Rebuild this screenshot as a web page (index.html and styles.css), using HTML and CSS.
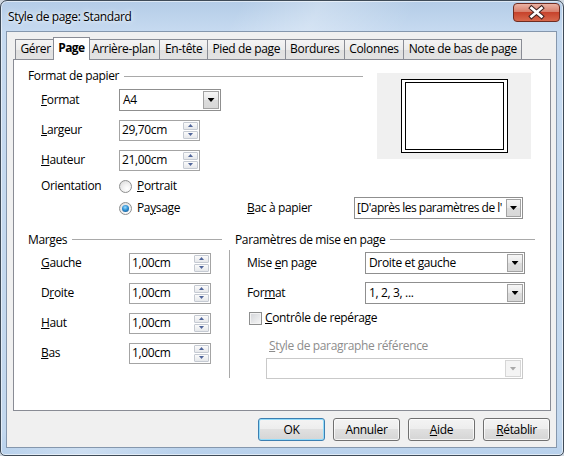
FILE: index.html
```html
<!DOCTYPE html>
<html lang="fr">
<head>
<meta charset="utf-8">
<title>Style de page: Standard</title>
<link rel="stylesheet" href="styles.css">
</head>
<body>
<div class="window">
  <div class="titlebar">
    <span class="title">Style de page: Standard</span>
    <div class="close" aria-label="Fermer">
      <svg width="47" height="19" viewBox="0 0 47 19">
        <defs>
          <linearGradient id="cg" x1="0" y1="0" x2="0" y2="1">
            <stop offset="0" stop-color="#ecb6a8"/>
            <stop offset="0.45" stop-color="#d8806d"/>
            <stop offset="0.5" stop-color="#c7432c"/>
            <stop offset="1" stop-color="#d86a4e"/>
          </linearGradient>
        </defs>
        <rect x="0.5" y="0.5" width="46" height="18" rx="3.5" fill="url(#cg)" stroke="#6e2c22"/>
        <path d="M18.5 5 L28.5 13.5 M28.5 5 L18.5 13.5" stroke="#402321" stroke-width="4.6" stroke-linecap="square" fill="none"/>
        <path d="M18.5 5 L28.5 13.5 M28.5 5 L18.5 13.5" stroke="#ffffff" stroke-width="2.6" stroke-linecap="square" fill="none"/>
      </svg>
    </div>
  </div>

  <div class="client">
    <div class="tabs">
      <div class="tab">Gérer</div>
      <div class="tab active">Page</div>
      <div class="tab">Arrière-plan</div>
      <div class="tab">En-tête</div>
      <div class="tab">Pied de page</div>
      <div class="tab">Bordures</div>
      <div class="tab">Colonnes</div>
      <div class="tab">Note de bas de page</div>
    </div>

    <div class="panel">
      <div class="top">
        <div class="paper">
          <div class="group-head"><span>Format de papier</span><i class="rule"></i></div>
          <div class="row">
            <span class="lbl lbl-paper"><u>F</u>ormat</span>
            <div class="combo combo-format"><span class="val">A4</span><span class="drop"></span></div>
          </div>
          <div class="row">
            <span class="lbl lbl-paper"><u>L</u>argeur</span>
            <div class="field spin-field"><span class="val">29,70cm</span><span class="spin"><i class="up"></i><i class="dn"></i></span></div>
          </div>
          <div class="row">
            <span class="lbl lbl-paper"><u>H</u>auteur</span>
            <div class="field spin-field"><span class="val">21,00cm</span><span class="spin"><i class="up"></i><i class="dn"></i></span></div>
          </div>
          <div class="row short">
            <span class="lbl lbl-paper">Orientation</span>
            <span class="radio-item"><span class="radio"></span><span><u>P</u>ortrait</span></span>
          </div>
        </div>
        <div class="preview"><div class="sheet"><div class="sheet-inner"></div></div></div>
      </div>

      <div class="row short paysage">
        <span class="radio-item radio-paysage"><span class="radio on"></span><span>Pa<u>y</u>sage</span></span>
        <span class="lbl lbl-bac"><u>B</u>ac à papier</span>
        <div class="combo combo-bac"><span class="val">[D'après les paramètres de l'</span><span class="drop"></span></div>
      </div>

      <div class="bottom">
        <div class="marges">
          <div class="group-head"><span>Marges</span><i class="rule"></i></div>
          <div class="row">
            <span class="lbl lbl-marge"><u>G</u>auche</span>
            <div class="field spin-field marge-field"><span class="val">1,00cm</span><span class="spin"><i class="up"></i><i class="dn"></i></span></div>
          </div>
          <div class="row">
            <span class="lbl lbl-marge">D<u>r</u>oite</span>
            <div class="field spin-field marge-field"><span class="val">1,00cm</span><span class="spin"><i class="up"></i><i class="dn"></i></span></div>
          </div>
          <div class="row">
            <span class="lbl lbl-marge"><u>H</u>aut</span>
            <div class="field spin-field marge-field"><span class="val">1,00cm</span><span class="spin"><i class="up"></i><i class="dn"></i></span></div>
          </div>
          <div class="row">
            <span class="lbl lbl-marge"><u>B</u>as</span>
            <div class="field spin-field marge-field"><span class="val">1,00cm</span><span class="spin"><i class="up"></i><i class="dn"></i></span></div>
          </div>
        </div>

        <div class="vsep"><div class="vline"></div></div>

        <div class="params">
          <div class="group-head"><span>Paramètres de mise en page</span><i class="rule"></i></div>
          <div class="row">
            <span class="lbl lbl-param">Mise <u>e</u>n page</span>
            <div class="combo combo-layout"><span class="val">Droite et gauche</span><span class="drop"></span></div>
          </div>
          <div class="row">
            <span class="lbl lbl-param">For<u>m</u>at</span>
            <div class="combo combo-layout"><span class="val">1, 2, 3, ...</span><span class="drop"></span></div>
          </div>
          <div class="check-row"><span class="checkbox"></span><span><u>C</u>ontrôle de repérage</span></div>
          <div class="ref-label"><u>S</u>tyle de paragraphe référence</div>
          <div class="combo combo-ref disabled"><span class="val"></span><span class="drop"></span></div>
        </div>
      </div>
    </div>

    <div class="buttons">
      <div class="btn default">OK</div>
      <div class="btn">Annuler</div>
      <div class="btn"><span><u>A</u>ide</span></div>
      <div class="btn"><span><u>R</u>établir</span></div>
    </div>
  </div>
</div>
</body>
</html>
```

FILE: styles.css
```css
* { box-sizing: border-box; }

html, body {
  margin: 0;
  padding: 0;
}

body {
  width: 564px;
  height: 456px;
  overflow: hidden;
  background: #cfd7e0;
  font: 12px/16px "Open Sans", "Noto Sans", "DejaVu Sans", sans-serif;
  letter-spacing: -0.35px;
  color: #000;
}

u { text-decoration: underline; text-underline-offset: 1px; }

.window {
  width: 564px;
  height: 456px;
  border: 1px solid #3f4b58;
  border-radius: 7px 7px 5px 5px;
  background:
    linear-gradient(118deg, rgba(255,255,255,0) 30%, rgba(255,255,255,0.28) 40%, rgba(255,255,255,0) 52%),
    linear-gradient(180deg, #b4cce7 0, #c6daf0 30px, #c3d8ee 430px, #b8d1ec 100%);
  box-shadow: inset 0 0 0 1px rgba(255,255,255,0.55);
  display: flex;
  flex-direction: column;
  overflow: hidden;
}

.titlebar {
  height: 30px;
  flex: none;
  display: flex;
  align-items: flex-start;
  padding-left: 7px;
}

.title {
  margin-top: 7px;
  line-height: 17px;
  text-shadow: 0 0 7px rgba(255,255,255,0.95), 0 0 3px rgba(255,255,255,0.8);
}

.close {
  margin-left: auto;
  margin-top: 2px;
  margin-right: 3px;
  width: 47px;
  height: 19px;
}
.close svg { display: block; }

.client {
  flex: 1;
  margin: 0 6px 7px 5px;
  border: 1px solid #8597ad;
  background: #f0f0f0;
  padding: 5px 5px 0 6px;
  display: flex;
  flex-direction: column;
}

/* tabs */
.tabs {
  display: flex;
  align-items: flex-end;
  height: 22px;
  padding-left: 2px;
  position: relative;
  z-index: 1;
}

.tab {
  height: 20px;
  padding: 0 4.5px;
  border: 1px solid #898c95;
  border-bottom: none;
  margin-left: -1px;
  background: linear-gradient(#f4f4f4, #ececec 50%, #e0e0e0 51%, #e3e3e3);
  line-height: 18px;
  white-space: nowrap;
}
.tab:first-child { margin-left: 0; }

.tab.active {
  position: relative;
  z-index: 2;
  height: 23px;
  margin-bottom: -1px;
  margin-left: -3px;
  margin-right: -2px;
  padding: 0 4px;
  background: #fff;
  font-weight: bold;
  letter-spacing: -0.6px;
  line-height: 20px;
}

/* panel */
.panel {
  height: 352px;
  flex: none;
  border: 1px solid #898c95;
  background: #fff;
  padding: 0 14px;
}

.top {
  display: flex;
  gap: 14px;
}

.paper { width: 335px; }

.group-head {
  display: flex;
  align-items: center;
  gap: 5px;
  height: 16px;
  white-space: nowrap;
}
.paper .group-head { margin-top: 8px; margin-bottom: 1px; }

.rule {
  flex: 1;
  height: 1px;
  background: #a9a9a9;
}

.row {
  display: flex;
  align-items: center;
  height: 30px;
  padding-left: 13px;
  white-space: nowrap;
}
.row.short { height: 22px; }

.lbl { flex: none; }
.lbl-paper { width: 78px; }
.lbl-marge { width: 88px; }
.lbl-bac { width: 107px; }
.lbl-param { width: 118px; }

/* fields */
.field {
  height: 21px;
  border: 1px solid #a4a4a4;
  background: #fff;
  display: flex;
  align-items: center;
  padding: 0 1px 0 2px;
}
.spin-field { width: 81px; }
.marge-field { width: 82px; }

.spin {
  margin-left: auto;
  width: 15px;
  height: 17px;
  display: flex;
  flex-direction: column;
  gap: 1px;
}
.spin i {
  flex: 1;
  border: 1px solid #c5cad2;
  border-radius: 1px;
  background: linear-gradient(#fbfbfb, #e6e8eb);
  display: flex;
  align-items: center;
  justify-content: center;
}
.spin i::after {
  content: "";
  width: 5px;
  height: 3px;
  background: #50659a;
  clip-path: polygon(50% 0, 100% 100%, 0 100%);
}
.spin i.dn::after { clip-path: polygon(0 0, 100% 0, 50% 100%); }

.combo {
  height: 22px;
  border: 1px solid #8f8f8f;
  background: #fff;
  display: flex;
  align-items: center;
  padding: 1px;
}
.combo .val {
  flex: 1;
  padding-left: 2px;
  overflow: hidden;
  white-space: nowrap;
}
.drop {
  flex: none;
  width: 16px;
  align-self: stretch;
  border: 1px solid #a2a2a2;
  background: linear-gradient(#f6f6f6, #e8e8e8 50%, #dcdcdc 51%, #d8d8d8);
  display: flex;
  align-items: center;
  justify-content: center;
}
.drop::after {
  content: "";
  width: 7px;
  height: 4px;
  background: #000;
  clip-path: polygon(0 0, 100% 0, 50% 100%);
}

.combo-format { width: 102px; }
.combo-bac { width: 169px; }
.combo-bac .val { padding-left: 1px; letter-spacing: -0.5px; }
.combo-bac .drop { width: 15px; }
.combo-layout { width: 160px; }
.combo-ref {
  width: 257px;
  height: 21px;
  margin: 4px 0 0 31px;
}
.combo.disabled { border-color: #c9c9c9; }
.combo.disabled .drop {
  border-color: #d6d6d6;
  background: #f4f4f4;
}
.combo.disabled .drop::after { background: #a9a9a9; }

/* radio & checkbox */
.radio-item {
  display: flex;
  align-items: center;
  gap: 5px;
}
.radio-paysage { width: 128px; }

.radio {
  flex: none;
  width: 13px;
  height: 13px;
  border-radius: 50%;
  border: 1px solid #8e8f8f;
  background: radial-gradient(circle at 65% 70%, #ffffff 0, #f2f2f2 40%, #d6d6d6 100%);
  display: flex;
  align-items: center;
  justify-content: center;
}
.radio.on::after {
  content: "";
  width: 7px;
  height: 7px;
  border-radius: 50%;
  background: radial-gradient(circle at 45% 35%, #9fdcfb 0, #2f91d6 45%, #0f4677 100%);
}

.check-row {
  display: flex;
  align-items: center;
  gap: 3px;
  height: 20px;
  padding-left: 14px;
  white-space: nowrap;
}
.checkbox {
  flex: none;
  width: 13px;
  height: 13px;
  border: 1px solid #8e8f8f;
  background: linear-gradient(135deg, #d2d4d8, #f7f7f7);
  box-shadow: inset 0 0 0 1px #f3f3f3;
}

.ref-label {
  margin-top: 10px;
  padding-left: 34px;
  height: 16px;
  color: #8d8d8d;
  white-space: nowrap;
}

/* preview */
.preview {
  width: 154px;
  height: 86px;
  margin-top: 13px;
  background: #f0f0f0;
  display: flex;
  align-items: center;
  justify-content: center;
}
.sheet {
  width: 107px;
  height: 74px;
  border: 1px solid #000;
  background: #fff;
  padding: 2px 3px;
}
.sheet-inner {
  height: 100%;
  border: 1px solid #000;
}

/* lower section */
.paysage { padding-left: 91px; }

.bottom {
  display: flex;
  margin-top: 12px;
}
.bottom .group-head { height: 17px; }

.marges { width: 194px; }
.vsep { width: 13px; flex: none; }
.vline {
  margin-left: 7px;
  margin-top: 19px;
  width: 1px;
  height: 128px;
  background: #a9a9a9;
}
.params { width: 300px; }
.params .row { padding-left: 12px; }

/* buttons */
.buttons {
  display: flex;
  justify-content: flex-end;
  gap: 8px;
  margin-top: 7px;
  padding-right: 1px;
}
.btn {
  width: 67px;
  height: 23px;
  border: 1px solid #707070;
  border-radius: 3px;
  background: linear-gradient(#f4f4f4 0, #ededed 48%, #e0e0e0 50%, #d5d5d5 100%);
  box-shadow: inset 0 0 0 1px rgba(255,255,255,0.75);
  display: flex;
  align-items: center;
  justify-content: center;
  white-space: nowrap;
}
.btn.default {
  border-color: #3c7fb1;
  box-shadow: inset 0 0 0 1px #93dcfa;
}
```
